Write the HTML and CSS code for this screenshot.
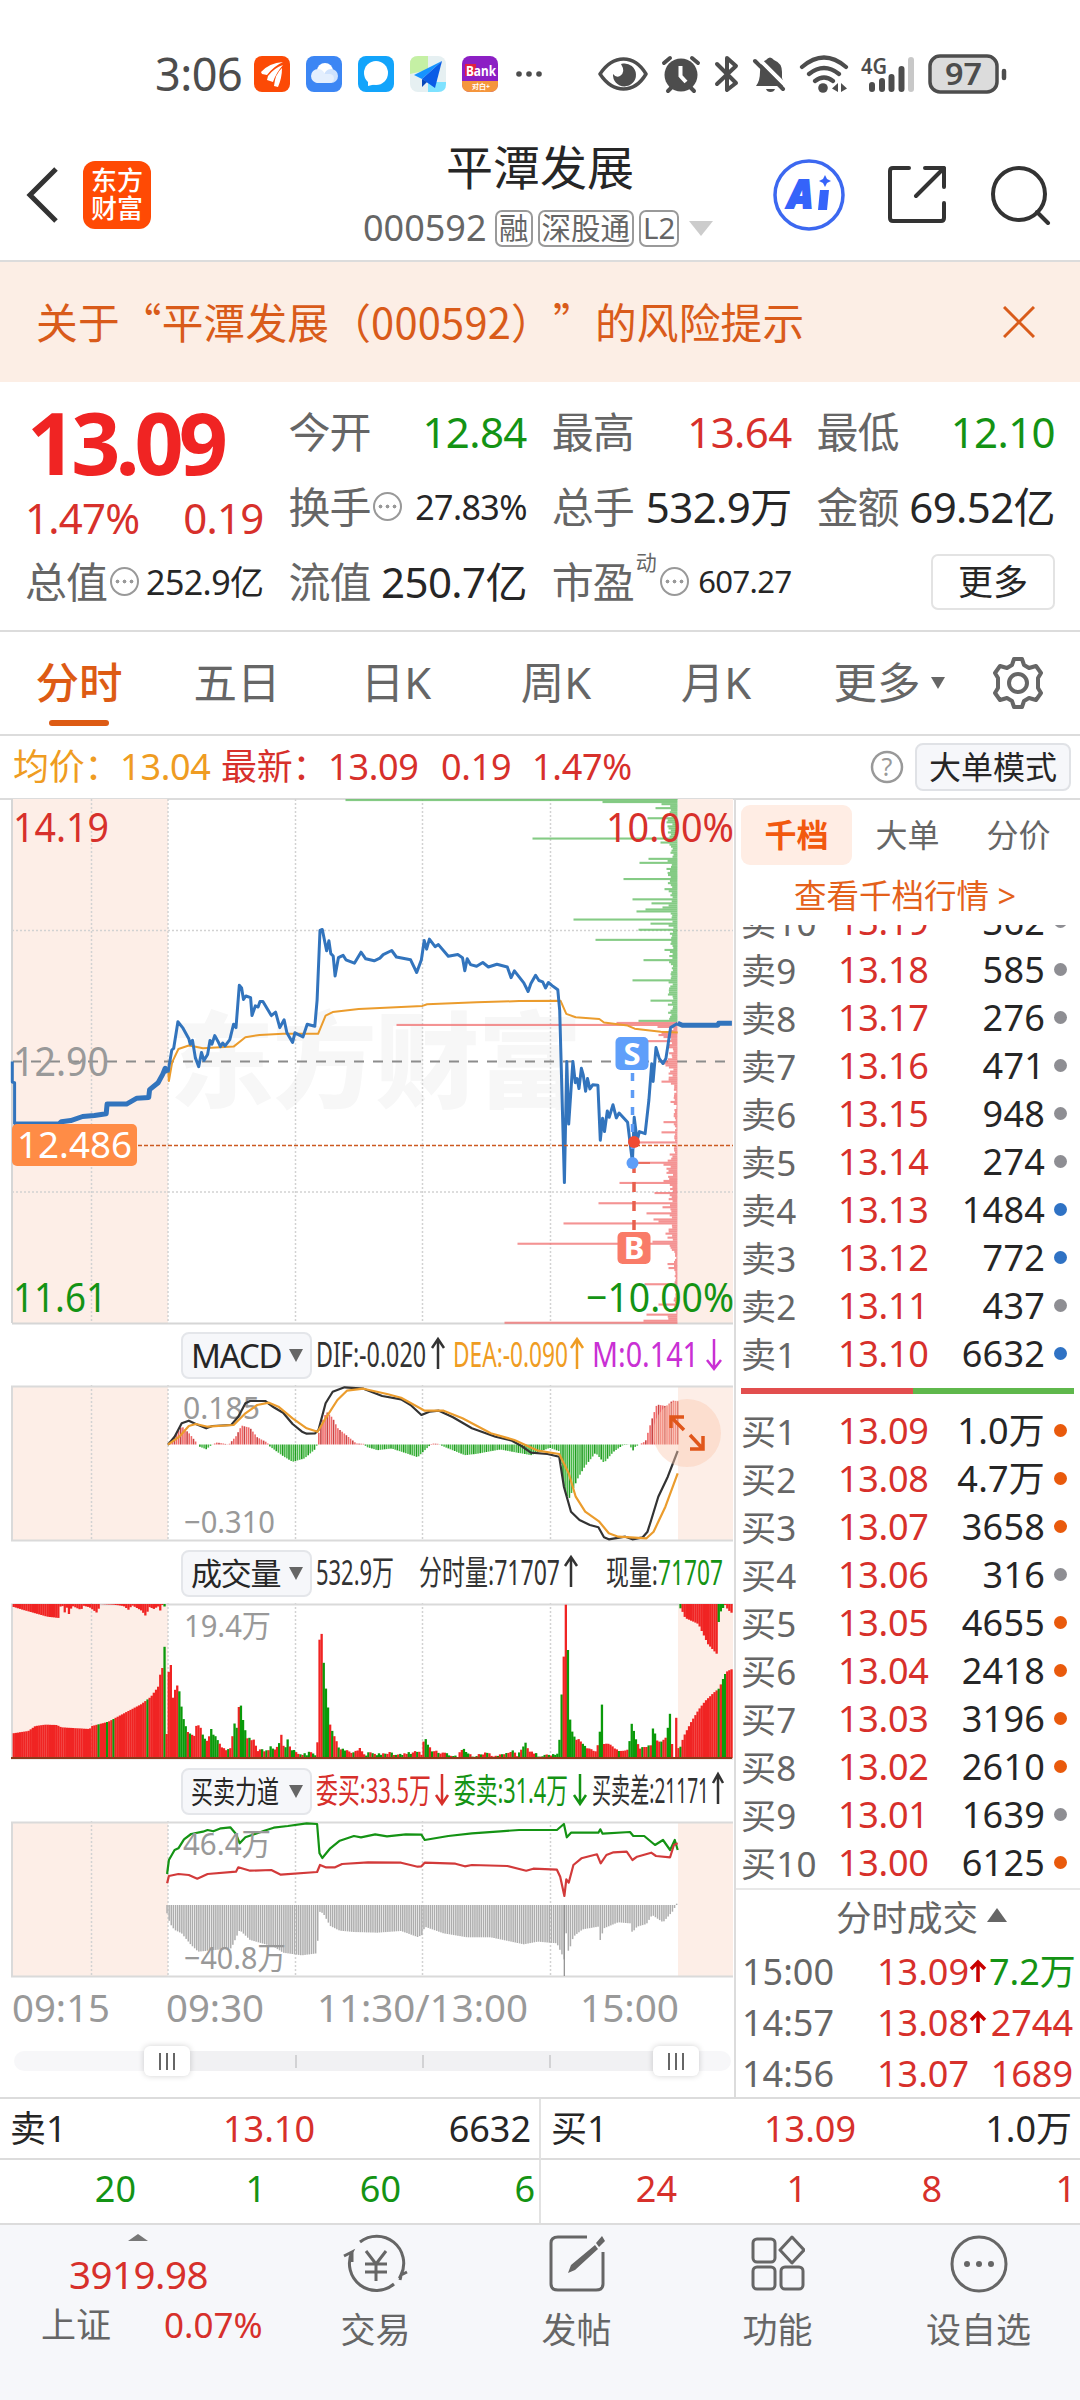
FILE: index.html
```html
<!DOCTYPE html>
<html lang="zh-CN">

<head>
    <meta charset="UTF-8">
    <meta name="viewport" content="width=device-width, initial-scale=1.0">
    <title>平潭发展 000592</title>
    <link rel="stylesheet" href="styles.css">
</head>

<body>

    <div class="statusbar">
        <span class="clock">3:06</span>
        <div class="apps">
            <svg width="36" height="36" viewBox="0 0 36 36"><rect width="36" height="36" rx="8" fill="#fc4a06"/><path d="M7 16Q15 7 29 6Q20 10 13 19L8 18ZM14 20Q20 12 29 9Q22 17 19 26L13 24ZM20 30Q21 18 28 12Q28 22 24 31Z" fill="#fff"/></svg>
            <svg width="36" height="36" viewBox="0 0 36 36"><rect width="36" height="36" rx="8" fill="#3c86f4"/><circle cx="19" cy="15" r="8" fill="#fff"/><circle cx="12" cy="20" r="7" fill="#e4effe"/><circle cx="25" cy="20" r="7" fill="#cfe2fd"/><rect x="8" y="18" width="20" height="9" rx="4.500" fill="#e4effe"/></svg>
            <svg width="36" height="36" viewBox="0 0 36 36"><rect width="36" height="36" rx="8" fill="#12a4fb"/><circle cx="18" cy="17" r="12" fill="#fff"/><path d="M10 24L10 30L18 28Z" fill="#fff"/></svg>
            <svg width="36" height="36" viewBox="0 0 36 36"><rect width="36" height="36" rx="8" fill="#e6f0f2"/><path d="M8 0H18V14L0 18V8Q0 0 8 0Z" fill="#c5f0a4"/><path d="M18 26H36V28Q36 36 28 36H18Z" fill="#7ee2ff"/><path d="M32 5L4 19L12 23Z" fill="#1593ff"/><path d="M32 5L12 23L25 32Z" fill="#0a5ce6"/><path d="M12 23V31L17 26Z" fill="#0647b8"/></svg>
            <svg width="36" height="36" viewBox="0 0 36 36"><rect width="36" height="36" rx="8" fill="#8c1fc4"/><path d="M0 25H36V28Q36 36 28 36H8Q0 36 0 28Z" fill="#f5963c"/><rect x="3" y="8" width="11" height="12" fill="#e3213f"/><text x="4" y="20" font-size="14" font-weight="700" fill="#fff" textLength="30" lengthAdjust="spacingAndGlyphs">Bank</text><text x="10" y="33" font-size="7" font-weight="700" fill="#fff">对白+</text></svg>
        </div>
        <svg class="more-dots" width="26" height="8" viewBox="0 0 26 8" fill="#4d4d4d"><circle cx="3" cy="4" r="2.800"/><circle cx="13" cy="4" r="2.800"/><circle cx="23" cy="4" r="2.800"/></svg>
        <svg class="sys" width="410" height="40" viewBox="0 0 410 40" fill="none" stroke="#4d4d4d">
            <!-- eye -->
            <path d="M2 20Q12 5 25.500 5Q39 5 48 20Q39 35 25.500 35Q12 35 2 20Z" stroke-width="3.500" stroke-linejoin="round"/>
            <path d="M25 9.500A11.500 11.500 0 1 1 15 20Q18 24 22 22Q28 18 23 10Z" fill="#4d4d4d" stroke="none"/>
            <!-- alarm -->
            <circle cx="83" cy="21" r="16.500" fill="#4d4d4d" stroke="none"/>
            <path d="M66 9L72 4M100 9L94 4M70 37L73 34M96 37L93 34" stroke-width="4" stroke-linecap="round"/>
            <path d="M82.500 12V22L88 28" stroke="#fff" stroke-width="4"/>
            <!-- bluetooth -->
            <path d="M119 10L138 29L129 36V4L138 12L119 30" stroke-width="4" stroke-linejoin="round" stroke-linecap="round"/>
            <!-- muted bell -->
            <path d="M158 32Q162 27 162 18Q162 8 168 6Q172 1 176 6Q184 9 184 18V24L187 32Z" fill="#4d4d4d" stroke="none"/>
            <path d="M168 35H177Q176 38 172.500 38Q169 38 168 35Z" fill="#4d4d4d" stroke="none"/>
            <path d="M160 4L189 33" stroke="#fff" stroke-width="4"/>
            <path d="M157 7L185 35" stroke-width="4" stroke-linecap="round"/>
            <!-- wifi -->
            <path d="M204 13Q226 -6 248 13M211 20Q226 8 241 20M217 27Q226 20 235 27" stroke-width="4.200" stroke-linecap="round"/>
            <circle cx="225" cy="34" r="4.800" fill="#4d4d4d" stroke="none"/>
            <path d="M240 29V38L234 34.500ZM243 29V38L249 34.500Z" fill="#4d4d4d" stroke="none"/>
            <!-- signal -->
            <text x="263" y="20" font-size="22" font-weight="600" fill="#4d4d4d" stroke="none" textLength="26" lengthAdjust="spacingAndGlyphs">4G</text>
            <path d="M274 31V35M284 27V35M293.500 23V35M303.500 15V35" stroke-width="6" stroke-linecap="round"/>
            <path d="M313 6V35" stroke="#c8c8c8" stroke-width="6" stroke-linecap="round"/>
            <!-- battery -->
            <rect x="332" y="2" width="67" height="36" rx="10" fill="#dcdcdc" stroke-width="3.500"/>
            <text x="347" y="31" font-size="31" font-weight="600" fill="#4d4d4d" stroke="none" textLength="37" lengthAdjust="spacingAndGlyphs">97</text>
            <path d="M406 17V24" stroke-width="4.500" stroke-linecap="round"/>
        </svg>
    </div>

    <header class="header">
        <svg class="back" width="34" height="58" viewBox="0 0 34 58" fill="none" stroke="#333" stroke-width="5"><path d="M30 3L4 29L30 55"/></svg>
        <div class="logo">东方<br>财富</div>
        <div class="title">
            <h1>平潭发展</h1>
            <div class="code"><span>000592</span><i>融</i><i>深股通</i><i>L2</i><b></b></div>
        </div>
        <svg width="72" height="72" viewBox="0 0 72 72"><circle cx="36" cy="36" r="34" fill="none" stroke="#3c68f0" stroke-width="3.500"/><text x="15" y="49" font-size="39" font-weight="900" font-style="italic" fill="#3563fa" stroke="#3563fa" stroke-width="2" textLength="25" lengthAdjust="spacingAndGlyphs">A</text><path d="M47 31H56L54 51H45Z" fill="#3563fa"/><path d="M52 16L54 20L58 22L54 24L52 28L50 24L46 22L50 20Z" fill="#3563fa"/></svg>
        <svg class="share" width="58" height="58" viewBox="0 0 58 58" fill="none" stroke="#333" stroke-width="4" stroke-linecap="round" stroke-linejoin="round"><path d="M21 2H5Q2 2 2 5V52Q2 55 5 55H53Q56 55 56 52V37M37 2H56V21M56 2L28 30"/></svg>
        <svg class="search" width="60" height="60" viewBox="0 0 60 60" fill="none" stroke="#333" stroke-width="4" stroke-linecap="round"><circle cx="28" cy="29" r="26"/><path d="M46 47L57 58"/></svg>
    </header>

    <div class="notice">
        <span>关于“平潭发展（000592）”的风险提示</span>
        <svg width="32" height="32" viewBox="0 0 32 32" stroke="#d95b1a" stroke-width="3"><path d="M1 1L31 31M31 1L1 31"/></svg>
    </div>

    <section class="quote">
        <div class="last">
            <strong>13.09</strong>
            <div class="pair red"><span>1.47%</span><span>0.19</span></div>
        </div>
        <div class="pair"><label>今开</label><span class="green">12.84</span></div>
        <div class="pair"><label>最高</label><span class="red">13.64</span></div>
        <div class="pair"><label>最低</label><span class="green">12.10</span></div>
        <div class="pair"><label>换手</label><em></em><span class="mid">27.83%</span></div>
        <div class="pair"><label>总手</label><span>532.9万</span></div>
        <div class="pair"><label>金额</label><span>69.52亿</span></div>
        <div class="pair"><label>总值</label><em></em><span class="mid">252.9亿</span></div>
        <div class="pair"><label>流值</label><span>250.7亿</span></div>
        <div class="pair"><label>市盈</label><sup>动</sup><em></em><span class="small">607.27</span></div>
        <div class="pair"><button class="more">更多</button></div>
    </section>

    <nav class="tabs">
        <a class="active">分时</a>
        <a>五日</a>
        <a>日K</a>
        <a>周K</a>
        <a>月K</a>
        <a class="drop">更多<i></i></a>
        <svg width="52" height="54" viewBox="0 0 52 54" fill="none" stroke="#666" stroke-width="4" stroke-linejoin="round"><path d="M22 3H30L32 9L37 12L44 10L49 17L46 22V32L49 37L44 44L37 42L32 45L30 51H22L20 45L15 42L8 44L3 37L6 32V22L3 17L8 10L15 12L20 9Z"/><circle cx="26" cy="27" r="9"/></svg>
    </nav>

    <div class="avg">
        <span class="orange a1">均价：13.04</span>
        <span class="red a2">最新：13.09</span>
        <span class="red a3">0.19</span>
        <span class="red a4">1.47%</span>
        <svg width="34" height="34" viewBox="0 0 34 34"><circle cx="17" cy="17" r="15" fill="none" stroke="#999" stroke-width="2.500"/><text x="11.500" y="26" font-size="25" fill="#999">?</text></svg>
        <button>大单模式</button>
    </div>

    <main class="main">
        <div class="charts">
            <svg id="price" width="735" height="526" viewBox="0 0 735 526">
                <path d="M12 0H168V524H12ZM678 0H733V524H678Z" fill="#fdeee7"/>
                <text x="170" y="301" font-size="104" font-weight="900" fill="#f7f7f7" textLength="412">东方财富</text>
                <path class="grid" d="M91.500 0V524M168 0V524M295.500 0V524M422.500 0V524M550.500 0V524M12 131.500H733M12 393H733"/>
                <path d="M12 262.500H733" stroke="#8c8c8c" stroke-width="2" stroke-dasharray="10 9"/>
                <path d="M12 0V524M12 524.500H733" stroke="#d6d6d6" stroke-width="2" fill="none"/>
                <g id="depth"></g>
                <g id="priceLines"></g>
                <path d="M12 346.500H733" stroke="#cc5a20" stroke-width="1.500" stroke-dasharray="4 2"/>
                <path d="M632.500 274V360" stroke="#5e9cf5" stroke-width="3.500" stroke-dasharray="8 9"/>
                <path d="M634 364V434" stroke="#e8604e" stroke-width="3.500" stroke-dasharray="10 9"/>
                <circle cx="634" cy="343" r="6" fill="#f04a33"/>
                <circle cx="632.500" cy="364" r="6" fill="#5e9ef8"/>
                <g font-weight="700" font-size="31" fill="#fff" text-anchor="middle">
                    <rect x="615.500" y="238" width="33" height="33" rx="5" fill="#5f9ffa"/><text x="632" y="266">S</text>
                    <rect x="617.500" y="433" width="33" height="32" rx="5" fill="#f97b68"/><text x="634" y="460">B</text>
                </g>
                <g font-size="40">
                    <text x="13" y="43" fill="#d7302b" textLength="96" lengthAdjust="spacingAndGlyphs">14.19</text>
                    <text x="13" y="277" fill="#999" textLength="96" lengthAdjust="spacingAndGlyphs">12.90</text>
                    <text x="13" y="513" fill="#149314" textLength="94" lengthAdjust="spacingAndGlyphs">11.61</text>
                    <text x="606" y="43" fill="#d7302b" textLength="128" lengthAdjust="spacingAndGlyphs">10.00%</text>
                    <text x="586" y="513" fill="#149314" textLength="148" lengthAdjust="spacingAndGlyphs">−10.00%</text>
                </g>
                <rect x="12" y="325" width="125" height="42" rx="5" fill="#ff8c46"/>
                <text x="17" y="359" font-size="37" fill="#fff" textLength="115" lengthAdjust="spacingAndGlyphs">12.486</text>
            </svg>

            <div class="tool">
                <button class="en">MACD<i></i></button>
                <svg width="422" height="60" viewBox="0 0 422 60" font-size="34">
                    <text x="4" y="42" fill="#333" textLength="110" lengthAdjust="spacingAndGlyphs">DIF:-0.020</text>
                    <text x="141" y="42" fill="#ef9c22" textLength="115" lengthAdjust="spacingAndGlyphs">DEA:-0.090</text>
                    <text x="280" y="42" fill="#c930d4" textLength="107" lengthAdjust="spacingAndGlyphs">M:0.141</text>
                    <g fill="none" stroke-width="2.500"><path d="M126 44V15M120 23L126 14L132 23" stroke="#333"/><path d="M265 44V15M259 23L265 14L271 23" stroke="#ef9c22"/><path d="M402 14V43M395 35L402 44L409 35" stroke="#c930d4"/></g>
                </svg>
            </div>
            <div class="panel">
                <svg id="macd" width="735" height="158" viewBox="0 0 735 158">
                    <path d="M12 1H168V155H12ZM678 1H733V155H678Z" fill="#fdeee7"/>
                    <path class="grid" d="M91.500 0V155M168 0V155M295.500 0V155M422.500 0V155M550.500 0V155"/>
                    <path class="frame" d="M733 1.500H12V155.500H733"/>
                    <g font-size="31" fill="#999"><text x="183" y="34" textLength="77" lengthAdjust="spacingAndGlyphs">0.185</text><text x="184" y="148" textLength="91" lengthAdjust="spacingAndGlyphs">−0.310</text></g>
                    <g id="macdBars"></g>
                </svg>
                <svg class="expand" width="70" height="70" viewBox="0 0 70 70"><circle cx="35" cy="35" r="34" fill="#fbc9b2" fill-opacity=".45"/><path d="M32 32L20 20M19 30V19H32M38 37L51 51M38 51H51V38" fill="none" stroke="#e0561a" stroke-width="3.500"/></svg>
            </div>

            <div class="tool">
                <button>成交量<i></i></button>
                <svg width="422" height="60" viewBox="0 0 422 60" font-size="34" fill="#333">
                    <text x="4" y="42" textLength="78" lengthAdjust="spacingAndGlyphs">532.9万</text>
                    <text x="107" y="42" textLength="141" lengthAdjust="spacingAndGlyphs">分时量:71707</text>
                    <text x="294" y="42" textLength="52" lengthAdjust="spacingAndGlyphs">现量:</text>
                    <text x="346" y="42" fill="#149314" textLength="65" lengthAdjust="spacingAndGlyphs">71707</text>
                    <path d="M259 44V15M253 23L259 14L265 23" stroke="#333" stroke-width="2.500" fill="none"/>
                </svg>
            </div>
            <svg id="volume" width="735" height="158" viewBox="0 0 735 158">
                <path d="M12 1H168V155H12ZM678 1H733V155H678Z" fill="#fdeee7"/>
                <path class="grid" d="M91.500 0V155M168 0V155M295.500 0V155M422.500 0V155M550.500 0V155"/>
                <path class="frame" d="M733 1.500H12V155.500H733"/>
                <text x="184" y="34" font-size="31" fill="#999" textLength="87" lengthAdjust="spacingAndGlyphs">19.4万</text>
                <g id="volBars"></g>
            </svg>

            <div class="tool">
                <button><u>买卖力道</u><i></i></button>
                <svg width="422" height="60" viewBox="0 0 422 60" font-size="34">
                    <text x="4" y="42" fill="#d7302b" textLength="115" lengthAdjust="spacingAndGlyphs">委买:33.5万</text>
                    <text x="142" y="42" fill="#149314" textLength="114" lengthAdjust="spacingAndGlyphs">委卖:31.4万</text>
                    <text x="280" y="42" fill="#333" textLength="117" lengthAdjust="spacingAndGlyphs">买卖差:21171</text>
                    <g fill="none" stroke-width="2.500"><path d="M130 13V42M124 34L130 43L136 34" stroke="#d7302b"/><path d="M268 13V42M262 34L268 43L274 34" stroke="#149314"/><path d="M406 43V14M401 22L406 13L411 22" stroke="#333"/></g>
                </svg>
            </div>
            <svg id="power" width="735" height="158" viewBox="0 0 735 158">
                <path d="M12 1H168V155H12ZM678 1H733V155H678Z" fill="#fdeee7"/>
                <path class="grid" d="M91.500 0V155M168 0V155M295.500 0V155M422.500 0V155M550.500 0V155"/>
                <path class="frame" d="M733 1.500H12V155.500H733"/>
                <g id="powBars"></g>
                <g font-size="31" fill="#999"><text x="183" y="34" textLength="88" lengthAdjust="spacingAndGlyphs">46.4万</text><text x="184" y="148" textLength="102" lengthAdjust="spacingAndGlyphs">−40.8万</text></g>
            </svg>

            <svg width="735" height="61" viewBox="0 0 735 61" font-size="39" fill="#999">
                <text x="12" y="43" textLength="98" lengthAdjust="spacingAndGlyphs">09:15</text>
                <text x="166" y="43" textLength="98" lengthAdjust="spacingAndGlyphs">09:30</text>
                <text x="317" y="43" textLength="211" lengthAdjust="spacingAndGlyphs">11:30/13:00</text>
                <text x="580" y="43" textLength="99" lengthAdjust="spacingAndGlyphs">15:00</text>
            </svg>
            <div class="slider">
                <div class="track"><i></i><i></i><i></i></div>
                <div class="handle start"><i></i><i></i><i></i></div>
                <div class="handle end"><i></i><i></i><i></i></div>
            </div>
        </div>

        <aside class="book">
            <div class="seg"><a class="active">千档</a><a>大单</a><a>分价</a></div>
            <a class="all">查看千档行情 &gt;</a>
            <div class="asks" id="asks"></div>
            <div class="ratio"><i></i><b></b></div>
            <div class="bids" id="bids"></div>
            <div class="ticks-title">分时成交<i></i></div>
            <div class="ticks">
                <div><span>15:00</span><span class="red">13.09</span><svg width="18" height="26" viewBox="0 0 18 26"><path d="M9 23V4M2 10L9 3L16 10" fill="none" stroke="#c80000" stroke-width="3.500"/></svg><span class="green">7.2万</span></div>
                <div><span>14:57</span><span class="red">13.08</span><svg width="18" height="26" viewBox="0 0 18 26"><path d="M9 23V4M2 10L9 3L16 10" fill="none" stroke="#c80000" stroke-width="3.500"/></svg><span class="red">2744</span></div>
                <div><span>14:56</span><span class="red">13.07</span><svg width="18" height="26"></svg><span class="red">1689</span></div>
            </div>
        </aside>
    </main>

    <section class="level">
        <div class="one"><span>卖1</span><span class="red">13.10</span><span>6632</span></div>
        <div class="one"><span>买1</span><span class="red">13.09</span><span>1.0万</span></div>
        <div class="queue green"><span>20</span><span>1</span><span>60</span><span>6</span></div>
        <div class="queue red"><span>24</span><span>1</span><span>8</span><span>1</span></div>
    </section>

    <footer class="footer">
        <div class="index">
            <i></i>
            <span class="red points">3919.98</span>
            <div><span>上证</span><span class="red">0.07%</span></div>
        </div>
        <a>
            <svg width="66" height="60" viewBox="0 0 66 60" fill="none" stroke="#666" stroke-width="3"><path d="M17 8A27 27 0 0 1 58 41L64 38M58 42L57 46M51 50A27 27 0 0 1 9 18L1 22M9 17V28"/><path d="M23 17L33 30L43 17M22 30H44M22 38H44M33 30V47"/></svg>
            <span>交易</span>
        </a>
        <a>
            <svg width="56" height="60" viewBox="0 0 56 60" fill="none" stroke="#666" stroke-width="3"><path d="M38 3H9Q2 3 2 9V50Q2 56 9 56H47Q54 56 54 50V18"/><path d="M53 2L56 7L50 13L47 9ZM46 11L49 15L26 36L19 39L22 31Z" fill="#666" stroke="none"/></svg>
            <span>发帖</span>
        </a>
        <a>
            <svg width="54" height="60" viewBox="0 0 54 60" fill="none" stroke="#666" stroke-width="3"><rect x="2" y="5" width="22" height="23" rx="4"/><rect x="2" y="33" width="22" height="22" rx="4"/><rect x="30" y="33" width="22" height="22" rx="4"/><path d="M41 3L53 16L41 29L29 16Z" stroke-linejoin="round"/></svg>
            <span>功能</span>
        </a>
        <a>
            <svg width="60" height="60" viewBox="0 0 60 60" fill="none" stroke="#666" stroke-width="3"><circle cx="30" cy="30" r="27"/><g fill="#666" stroke="none"><circle cx="18" cy="30" r="3"/><circle cx="30" cy="30" r="3"/><circle cx="42" cy="30" r="3"/></g></svg>
            <span>设自选</span>
        </a>
    </footer>

    <script src="script.js"></script>
</body>

</html>
```
FILE: styles.css
```css
* {
    box-sizing: border-box;
}

body {
    margin: 0;
    width: 1080px;
    height: 2400px;
    overflow: hidden;
    background-color: #fff;
    color: #262626;
    font-family: "Noto Sans", "Noto Sans CJK SC", sans-serif;
    font-size: 36px;
    line-height: 1;
}

svg {
    display: block;
    flex: none;
}

button {
    font-family: inherit;
    line-height: 1;
    color: #262626;
    padding: 0;
}

i, em {
    font-style: normal;
}

span, label, a {
    white-space: nowrap;
}

.red {
    color: #d7302b;
}

.green {
    color: #149314;
}

.orange {
    color: #ef9c22;
}

/* status bar */
.statusbar {
    display: flex;
    align-items: center;
    height: 130px;
    padding: 17px 0 0 155px;
    color: #4d4d4d;
}

.clock {
    width: 99px;
    font-size: 45px;
    letter-spacing: -0.5px;
}

.apps {
    display: flex;
    gap: 16px;
}

.more-dots {
    margin-left: 18px;
}

.sys {
    margin-left: 56px;
}

/* header */
.header {
    display: flex;
    align-items: center;
    height: 132px;
    padding-left: 26px;
    border-bottom: 2px solid #dcdcdc;
}

.logo {
    width: 68px;
    height: 68px;
    margin-left: 23px;
    padding-top: 5px;
    border-radius: 12px;
    background-color: #ff4a04;
    color: #fff;
    font-size: 26px;
    font-weight: 500;
    line-height: 28px;
    text-align: center;
}

.title {
    width: 622px;
    height: 130px;
    padding: 14px 0 0 212px;
}

h1 {
    margin: 0 0 18px 83px;
    font-size: 47px;
    font-weight: 400;
    line-height: 47px;
}

.code {
    display: flex;
    align-items: center;
    height: 38px;
    color: #666;
}

.code span {
    width: 132px;
}

.code i {
    height: 37px;
    margin-right: 5px;
    padding: 0 2px;
    border: 2px solid #999;
    border-radius: 7px;
    font-size: 29.5px;
    line-height: 32px;
}

.code b {
    margin-left: 5px;
    border: 12px solid transparent;
    border-top: 15px solid #ccc;
    border-bottom: 0;
}

.share {
    margin-left: 43px;
}

.search {
    margin-left: 45px;
}

/* risk notice */
.notice {
    display: flex;
    align-items: center;
    justify-content: space-between;
    height: 120px;
    padding: 0 45px 0 36px;
    background-color: #fceee5;
    color: #d95b1a;
    font-family: "Noto Sans CJK SC", sans-serif;
    font-size: 41.7px;
    letter-spacing: 0.2px;
    text-spacing-trim: space-all;
}

/* quote */
.quote {
    display: grid;
    grid-template-columns: repeat(4, 1fr);
    grid-template-rows: 75px 75px 75px;
    column-gap: 25px;
    height: 250px;
    padding: 12px 25px 0;
    border-bottom: 2px solid #dcdcdc;
    font-size: 42px;
}

.last {
    grid-row: span 2;
    padding-top: 11px;
}

.last strong {
    display: block;
    height: 88px;
    padding-left: 2px;
    color: #f02423;
    font-size: 86px;
    line-height: 74px;
    letter-spacing: -5px;
}

.pair {
    display: flex;
    align-items: center;
    justify-content: space-between;
    letter-spacing: -0.6px;
}

.last .pair {
    height: 50px;
    letter-spacing: -0.8px;
}

.pair label {
    color: #666;
    letter-spacing: -1px;
}

.pair em {
    width: 29px;
    height: 29px;
    margin-left: 3px;
    padding: 0 2px;
    border: 2px solid #999;
    border-radius: 50%;
    background: radial-gradient(circle, #999 1.7px, transparent 2.2px) center / 7px 25px repeat-x;
    background-clip: content-box;
}

.mid {
    margin-left: auto;
    font-size: 34px;
}

.small {
    margin-left: 9px;
    margin-right: auto;
    font-size: 31px;
}

.pair sup {
    align-self: flex-start;
    margin: 6px 0 0 2px;
    color: #666;
    font-size: 21px;
    line-height: 24px;
}

.pair sup + em {
    margin-left: 4px;
}

.more {
    width: 124px;
    height: 56px;
    margin-left: auto;
    border: 2px solid #e3e3e3;
    border-radius: 7px;
    background-color: #fff;
    font-size: 35px;
}

/* period tabs */
.tabs {
    display: grid;
    grid-template-columns: 158px 158px 160px 160px 160px 186px 72px;
    justify-items: center;
    align-items: center;
    height: 104px;
    border-bottom: 2px solid #dcdcdc;
    color: #666;
    font-size: 43.5px;
}

.tabs a {
    display: flex;
    align-items: center;
    justify-content: center;
    height: 102px;
}

.tabs a.active {
    position: relative;
    color: #dd5b14;
    font-weight: 500;
}

.tabs a.active::after {
    content: "";
    position: absolute;
    left: 13px;
    bottom: 8px;
    width: 60px;
    height: 6px;
    border-radius: 3px;
    background-color: #dd5b14;
}

.drop i {
    margin-left: 10px;
    border: 7px solid transparent;
    border-top: 12px solid #666;
    border-bottom: 0;
}

/* average line */
.avg {
    display: flex;
    align-items: center;
    height: 64px;
    padding-left: 13px;
    border-bottom: 2px solid #dcdcdc;
}

.avg span {
    letter-spacing: -0.3px;
}

.a1 {
    width: 208px;
}

.a2 {
    width: 220px;
}

.a3 {
    width: 91px;
}

.a4 {
    width: 106px;
}

.avg svg {
    margin-left: auto;
}

.avg button {
    width: 156px;
    height: 48px;
    margin: 0 9px 0 11px;
    border: 2px solid #e0e2e6;
    border-radius: 8px;
    background-color: #f6f7fa;
    font-size: 32px;
}

/* charts column */
.main {
    display: flex;
    height: 1300px;
    margin-top: -1px;
    border-bottom: 2px solid #dcdcdc;
}

.charts {
    width: 736px;
    flex: none;
    border-right: 2px solid #dcdcdc;
}

.grid {
    fill: none;
    stroke: #d2d2d2;
    stroke-width: 1.5;
    stroke-dasharray: 2 2;
}

.frame {
    fill: none;
    stroke: #dadada;
    stroke-width: 2;
}

.tool {
    display: flex;
    align-items: center;
    height: 60px;
    padding-left: 181px;
}

.tool button {
    display: flex;
    align-items: center;
    justify-content: space-between;
    width: 132px;
    height: 47px;
    padding: 0 7px 0 8px;
    border: 2px solid #e4e6ea;
    border-radius: 8px;
    background-color: #f6f7fa;
    font-size: 31px;
    letter-spacing: -1.2px;
}

.tool .en {
    font-size: 33px;
}

.tool button i {
    border: 7px solid transparent;
    border-top: 13px solid #666;
    border-bottom: 0;
}

.tool u {
    width: 88px;
    letter-spacing: 0;
    text-decoration: none;
    white-space: nowrap;
    transform: scaleX(0.71);
    transform-origin: left;
}

.panel {
    position: relative;
}

.expand {
    position: absolute;
    left: 652px;
    top: 13px;
}

.slider {
    position: relative;
    height: 57px;
    padding: 11px 3px 0 14px;
}

.track {
    display: flex;
    align-items: center;
    height: 20px;
    padding-left: 281px;
    gap: 125px;
    border-radius: 10px;
    background: linear-gradient(to right, #f7f7f9 150px, #f1f1f3 150px, #f1f1f3 660px, #f7f7f9 660px);
}

.track i {
    width: 2px;
    height: 13px;
    background-color: #d2d2d4;
}

.handle {
    position: absolute;
    top: 6px;
    display: flex;
    align-items: center;
    justify-content: center;
    gap: 5px;
    width: 46px;
    height: 30px;
    border-radius: 6px;
    background-color: #fff;
    box-shadow: 0 0 6px rgba(0, 0, 0, 0.18);
}

.handle i {
    width: 2px;
    height: 17px;
    background-color: #666;
}

.start {
    left: 144px;
}

.end {
    left: 653px;
}

/* order book */
.book {
    width: 344px;
}

.seg {
    display: flex;
    align-items: center;
    padding: 6px 0 0 5px;
    color: #666;
    font-size: 32px;
}

.seg a {
    width: 111px;
    line-height: 60px;
    text-align: center;
}

.seg a.active {
    border-radius: 9px;
    background-color: #ffede4;
    color: #f2590f;
    font-weight: 700;
}

.all {
    display: block;
    height: 60px;
    padding: 13px 0 0 58px;
    color: #e4611b;
    font-size: 32.5px;
    line-height: 36px;
}

.asks {
    display: flex;
    flex-direction: column;
    justify-content: flex-end;
    height: 453px;
    overflow: hidden;
}

.row {
    flex: none;
    display: grid;
    grid-template-columns: 97px 100px 1fr 22px;
    align-items: center;
    height: 48px;
    padding: 0 13px 0 5px;
    letter-spacing: 0.2px;
}

.row span:first-child {
    color: #666;
    font-size: 35px;
}

.row span:nth-child(2) {
    letter-spacing: -0.3px;
}

.row span:nth-child(3) {
    text-align: right;
}

.row i {
    width: 13px;
    height: 13px;
    margin: -2px 0 0 9px;
    border-radius: 50%;
    background-color: #8e8e93;
}

.row .blue {
    background-color: #2f72c4;
}

.row .hot {
    background-color: #e95a0c;
}

.ratio {
    display: flex;
    height: 28px;
    padding: 10px 6px 12px 5px;
}

.ratio i {
    width: 172px;
    background-color: #e24e4e;
}

.ratio b {
    flex: 1;
    background-color: #5fb84c;
}

.bids {
    height: 482px;
    padding-top: 1px;
}

.ticks-title {
    display: flex;
    align-items: center;
    height: 58px;
    padding-left: 100px;
    border-top: 2px solid #e8e8e8;
    color: #666;
    font-size: 35.5px;
}

.ticks-title i {
    margin: -6px 0 0 9px;
    border: 10px solid transparent;
    border-bottom: 14px solid #666;
    border-top: 0;
}

.ticks div {
    display: grid;
    grid-template-columns: 135px 92px 20px 1fr;
    align-items: center;
    height: 51px;
    padding: 0 7px 0 6px;
}

.ticks span:first-child {
    color: #666;
}

.ticks span:last-child {
    text-align: right;
}

/* level one */
.level {
    display: grid;
    grid-template-columns: 541px 539px;
    grid-template-rows: 61px 63px;
    border-bottom: 2px solid #dcdcdc;
}

.level > div:nth-child(odd) {
    border-right: 2px solid #e2e2e2;
}

.one {
    display: grid;
    grid-template-columns: 213px 1fr 1fr;
    align-items: center;
    padding: 0 8px 0 10px;
    border-bottom: 2px solid #dcdcdc;
}

.one span:last-child {
    text-align: right;
}

.queue {
    display: grid;
    grid-template-columns: 136px 130px 135px 134px;
    padding-top: 11px;
    text-align: right;
}

/* footer */
.footer {
    display: flex;
    height: 178px;
    background-color: #f6f7fa;
    color: #666;
    font-size: 35px;
}

.index {
    display: flex;
    flex: none;
    flex-direction: column;
    align-items: flex-start;
    width: 275px;
    padding: 9px 0 0 13px;
}

.index i {
    margin-left: 115px;
    border: 10px solid transparent;
    border-bottom: 7px solid #777;
    border-top: 0;
}

.points {
    margin: 14px 0 13px 56px;
    font-size: 38.5px;
    letter-spacing: -0.5px;
}

.index div {
    display: flex;
    gap: 53px;
    padding-left: 28px;
}

.footer a {
    display: flex;
    flex: none;
    flex-direction: column;
    align-items: center;
    width: 201px;
    padding-top: 9px;
}

.footer a span {
    margin-top: 18px;
}
```
FILE: script.js
```js
const NS = "http://www.w3.org/2000/svg";
const SX = 735 / 1557.5;
const RED = "#f02423";
const GREEN = "#0a9a0a";

function add(id, tag, attrs) {
    const el = document.createElementNS(NS, tag);
    for (const k in attrs) el.setAttribute(k, attrs[k]);
    document.getElementById(id).appendChild(el);
}

function parse(text) {
    return text.trim().split(/\s+/).map(p => p.split(",").map(Number));
}

function line(id, text, sy, oy, color, width) {
    const pts = parse(text).map(([x, y]) => (x * SX).toFixed(1) + "," + (y * sy + oy).toFixed(1)).join(" ");
    add(id, "polyline", { points: pts, fill: "none", stroke: color, "stroke-width": width, "stroke-linejoin": "round" });
}

function bar(id, x, y1, y2, w, color) {
    add(id, "rect", { x: x.toFixed(1), y: Math.min(y1, y2).toFixed(1), width: w, height: Math.abs(y2 - y1).toFixed(1), fill: color });
}

// linear value between key points
function at(keys, x) {
    for (let i = 1; i < keys.length; i++) {
        if (x <= keys[i][0]) {
            const [x0, y0] = keys[i - 1], [x1, y1] = keys[i];
            return y0 + (y1 - y0) * (x - x0) / (x1 - x0);
        }
    }
    return keys[keys.length - 1][1];
}

function noise(i) {
    const v = Math.sin(i * 12.9898) * 43758.5453;
    return v - Math.floor(v);
}

// volume by price, one bar per cent
const depth = {};
parse(`29,332 35,75 41,16 52,22 81,30 93,11 140,145 150,17 199,29 211,38 228,11 258,54 288,13 317,45 329,26 340,15
346,32 352,41 376,104 388,27 405,39 435,82 464,13 494,34 553,45 611,27 671,39 676,61 682,281 688,20 705,16 711,19 717,14
729,36 788,17 794,14 800,12 847,16 906,7 965,14 994,16 1023,44 1082,44 1088,14 1100,11 1112,11 1136,14 1141,58 1170,23 1200,79 1212,15
1229,31 1247,24 1253,19 1258,114 1288,12 1312,25 1318,160 1376,10 1388,9 1435,33 1494,19 1524,31 1541,34 1547,173`)
    .forEach(([y, w]) => { depth[Math.round((y - 29) / 5.884)] = w; });
for (let i = 0; i <= 258; i++) {
    const quiet = (i > 140 && i < 175) || (i > 222 && i < 255);
    const w = depth[i] || (quiet ? 1 + noise(i) * 3 : 4 + noise(i) * 6);
    bar("depth", 677.5 - w, i * 2.026, i * 2.026 + 2.1, w, i < 110 ? "rgba(103,190,103,.8)" : "rgba(240,105,105,.72)");
}
add("depth", "path", { d: "M632 364V343M632 364H650", stroke: "#e8604e", "stroke-width": 1.5 });

line("priceLines", `356,805 358,845 365,790 378,752 400,742 412,745 430,750 495,745 520,718 550,711 600,708 674,708 690,655
705,645 760,636 895,627 905,622 1010,616 1100,613 1188,612 1200,650 1220,660 1270,665 1280,675 1330,684 1345,693 1400,702 1436,704`,
    .3444, -9, "#eb9c2d", 2);
line("priceLines", `356,820 364,755 368,750 377,673 387,690 400,722 403,738 408,727 414,778 421,803 427,762 432,785 440,768 445,727
449,738 455,713 462,730 467,745 472,735 477,743 487,725 495,680 500,690 507,567 512,575 516,608 521,598 531,603 534,655 541,627
547,630 551,614 557,614 575,655 584,645 593,690 602,667 608,705 620,733 625,705 642,717 651,680 667,686 672,610 678,408 683,405
692,467 697,438 701,475 706,482 710,540 717,487 727,480 733,493 751,503 765,471 775,490 793,496 805,488 812,478 830,466 840,485
870,493 883,530 893,493 899,437 904,462 910,433 922,455 929,449 950,483 970,478 980,487 985,525 990,490 997,507 1010,512 1023,501
1035,514 1053,506 1075,514 1083,545 1090,525 1110,560 1119,585 1125,562 1135,538 1142,553 1150,557 1156,575 1162,559 1170,568
1182,580 1186,640 1196,1140 1201,788 1205,970 1214,788 1219,850 1223,838 1227,867 1232,808 1236,828 1241,875 1245,838 1250,868
1256,856 1267,857 1272,1017 1277,953 1281,992 1287,932 1291,950 1299,914 1306,952 1312,938 1330,965 1340,1080 1344,950 1350,1018
1355,992 1367,998 1375,900 1381,795 1384,846 1390,748 1397,780 1405,794 1411,780 1421,690 1436,677`, .3444, -9, "#3274bd", 3);
line("priceLines", "26,788 26,848 31,850 31,970", .3444, -9, "#3274bd", 3);
line("priceLines", `29,970 125,970 130,963 150,960 175,948 200,945 225,940 227,912 268,912 290,895 315,893 317,870 335,850 345,825
350,808 356,820`, .3444, -9, "#3274bd", 5);
line("priceLines", "1436,677 1446,683 1521,683 1523,677 1551,677", .3444, -9, "#3274bd", 5);

// macd
const hist = parse(`356,0 370,25 385,55 400,35 415,8 422,-6 437,-14 450,0 460,6 485,0 500,25 512,57 530,50 545,22 566,6 572,-6
600,-35 620,-52 645,-42 668,-14 672,0 677,50 692,98 705,80 715,50 745,15 755,3 770,2 778,-8 800,-17 830,-12 885,-38 910,-4 915,3
928,2 940,-6 985,-32 1010,-28 1060,-15 1125,-32 1165,-10 1185,-20 1195,-130 1205,-165 1225,-100 1240,-65 1262,-25 1280,-55 1300,-22
1320,-2 1335,0 1340,-22 1345,-8 1355,0 1368,10 1380,70 1392,120 1412,115 1425,132 1436,130`);
for (let x = 356, i = 0; x < 1437; x += 4.5, i++) {
    const h = at(hist, x);
    bar("macdBars", x * SX - .8, 59.5, 59.5 - h / 3, 1.6, h > 0 ? (i % 3 ? "#ef6868" : "#c94444") : (i % 3 ? "#46b846" : "#219c21"));
}
line("macdBars", `356,374 370,350 385,310 400,302 415,312 437,325 450,318 490,315 505,290 520,250 530,243 562,243 580,262 600,278
620,312 640,335 650,341 668,340 675,330 690,250 705,215 730,202 770,206 810,228 850,238 870,255 893,285 910,275 930,272 960,292
1000,325 1050,350 1085,362 1105,378 1125,398 1160,402 1185,410 1195,500 1210,575 1228,600 1250,615 1268,622 1280,652 1290,658
1325,650 1340,658 1362,652 1372,635 1380,600 1395,530 1415,470 1436,393`, 1 / 3, -65, "#333", 2.2);
line("macdBars", `356,374 380,350 400,318 415,312 440,320 495,315 520,280 545,255 570,248 590,260 620,295 650,325 673,335 690,295
715,240 735,212 770,206 820,222 850,233 900,272 940,272 980,295 1040,340 1090,360 1140,392 1185,402 1205,460 1220,530 1240,575
1270,605 1290,640 1310,650 1370,655 1385,635 1410,560 1436,460`, 1 / 3, -65, "#eb9c2d", 2.2);

// volume
const vol = parse(`27,580 60,573 75,558 95,554 120,555 130,562 190,567 195,558 230,545 260,522 300,492 320,470 335,440 340,400
345,380 349,312 353,582 358,375 363,375 367,487 372,440 377,435 381,460 387,528 397,575 405,583 412,588 417,550 426,565 431,592
441,606 446,563 454,585 461,602 470,618 478,630 488,620 494,580 498,538 502,570 507,487 511,497 516,550 523,590 537,598 547,630
570,632 574,612 580,634 592,605 597,583 602,630 610,598 616,625 630,638 650,643 656,628 668,645 673,598 678,228 683,308 687,385
691,453 700,555 708,588 720,626 745,636 764,626 775,645 783,632 790,642 820,638 850,644 885,632 894,645 899,585 904,608 915,630
940,638 970,650 980,622 990,638 1005,650 1034,634 1045,650 1075,638 1087,630 1095,650 1113,605 1120,630 1140,645 1175,645 1182,635
1187,578 1191,424 1196,322 1199,195 1202,195 1205,461 1209,562 1219,598 1227,598 1240,618 1262,636 1270,600 1273,528 1276,487 1280,608
1290,612 1308,628 1325,632 1333,618 1340,534 1345,592 1355,622 1380,616 1385,540 1390,600 1403,605 1411,590 1421,512 1425,648
1430,655 1434,487 1438,640 1445,605 1452,580 1465,545 1480,510 1495,482 1515,455 1524,445 1530,425 1535,405 1540,395 1549,388`);
const hang = parse(`27,8 50,18 100,38 125,42 127,8 134,6 136,32 140,5 147,34 152,5 172,18 176,5 190,10 207,28 211,0 240,2 262,6
272,17 280,4 300,20 310,38 315,8 328,16 334,4 339,22 343,2 349,8 353,0 1434,0 1440,8 1447,25 1452,42 1480,60 1500,120 1519,150
1524,30 1532,12 1537,2 1540,12 1549,26`);
const greenAt = [209, 227, 241, 314, 349, 381, 386, 390, 395, 403, 446, 498, 511, 516, 574, 610, 656, 687, 691, 1034, 1187, 1191, 1205, 1273, 1340, 1385, 1440, 1524, 1530, 1535];
for (let x = 29, i = 0; x < 1551; x += 4.5, i++) {
    const outside = x < 352 || x > 1438;
    let green = greenAt.some(g => Math.abs(g - x) < 2.3);
    if (!outside && x > 380 && !green) green = noise(i) > .58;
    if ((x > 668 && x < 682) || Math.abs(x - 1200) < 2.3) green = false;
    const jitter = outside || x < 450 ? 0 : noise(i + 7) * 8 - 3;
    bar("volBars", x * SX - 1.1, 155, Math.min(154, (at(vol, x) + jitter) / 3 - 63), 2.3, green ? GREEN : RED);
    if (outside) {
        const gTop = (x > 346 && x < 352) || (x > 1438 && x < 1445) || (x > 1521 && x < 1533);
        bar("volBars", x * SX - 1.1, 1, 1 + at(hang, x) / 3, 2.3, gTop ? GREEN : RED);
    }
}
bar("volBars", 11, 154, 156, 721, "#8c3a1c");

// bid / ask strength
const pow = parse(`354,460 360,490 370,510 385,520 405,555 420,575 490,565 508,510 530,540 580,560 600,578 640,586 672,580 677,455
685,460 700,498 720,512 750,516 800,518 850,513 885,531 895,525 900,500 940,520 990,532 1040,532 1110,553 1140,545 1180,550
1190,580 1196,600 1200,520 1205,578 1215,530 1235,508 1268,500 1272,540 1280,505 1310,487 1335,490 1340,518 1350,500 1370,492
1382,465 1405,487 1425,455 1432,438 1436,424`);
for (let x = 354; x < 1437; x += 4.5) {
    bar("powBars", x * SX - .8, 84, at(pow, x) / 3 - 61, 1.5, "#adadad");
}
bar("powBars", 563.7, 84, 155, 1.2, "#8c8c8c");
line("powBars", `354,342 358,300 370,270 378,265 390,238 405,222 430,215 440,210 452,214 468,205 488,202 500,222 508,250 520,232
560,212 580,203 610,198 650,190 672,192 677,280 683,294 700,265 720,242 750,228 765,232 795,223 820,229 860,223 893,224 900,240
950,228 1000,220 1060,214 1100,210 1180,210 1195,192 1201,232 1210,218 1268,218 1272,208 1277,221 1335,216 1342,228 1365,228
1388,255 1405,240 1420,270 1430,240 1436,270`, 1 / 3, -61, "#149314", 2.2);
line("powBars", `354,370 358,348 378,342 400,345 418,356 440,342 500,335 505,322 530,332 575,330 595,344 672,336 678,315 690,322
710,322 725,312 780,307 850,308 885,320 893,319 900,308 965,311 985,319 1000,315 1075,318 1115,332 1130,326 1180,329 1187,350
1196,408 1200,358 1205,368 1215,315 1232,295 1265,283 1273,310 1285,285 1300,277 1328,275 1340,300 1350,290 1380,278 1390,288
1420,292 1428,255 1436,250`, 1 / 3, -61, "#d23a3a", 2.2);

// order book rows
function rows(id, list) {
    document.getElementById(id).innerHTML = list.map(([name, price, qty, dot]) =>
        `<div class="row"><span>${name}</span><span class="red">${price}</span><span>${qty}</span><i class="${dot || ""}"></i></div>`
    ).join("");
}

rows("asks", [
    ["卖10", "13.19", "362"], ["卖9", "13.18", "585"], ["卖8", "13.17", "276"], ["卖7", "13.16", "471"],
    ["卖6", "13.15", "948"], ["卖5", "13.14", "274"], ["卖4", "13.13", "1484", "blue"], ["卖3", "13.12", "772", "blue"],
    ["卖2", "13.11", "437"], ["卖1", "13.10", "6632", "blue"]
]);
rows("bids", [
    ["买1", "13.09", "1.0万", "hot"], ["买2", "13.08", "4.7万", "hot"], ["买3", "13.07", "3658", "hot"], ["买4", "13.06", "316"],
    ["买5", "13.05", "4655", "hot"], ["买6", "13.04", "2418", "hot"], ["买7", "13.03", "3196", "hot"], ["买8", "13.02", "2610", "hot"],
    ["买9", "13.01", "1639"], ["买10", "13.00", "6125", "hot"]
]);
```
